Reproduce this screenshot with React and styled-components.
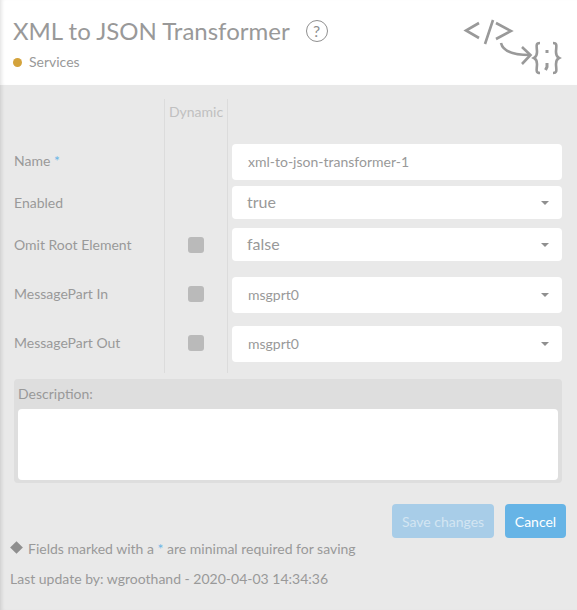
import React from 'react';
import styled, { createGlobalStyle, css } from 'styled-components';

const GlobalStyle = createGlobalStyle`
  html, body {
    margin: 0;
    padding: 0;
    background: #e9e9e9;
    overflow: hidden;
  }
  * {
    box-sizing: border-box;
  }
`;

const edgeShadow = css`
  box-shadow: inset 4px 0 4px -3px rgba(0, 0, 0, 0.14);
`;

const Page = styled.div`
  width: 577px;
  height: 610px;
  background: #e9e9e9;
  font-family: Lato, 'Open Sans', sans-serif;
  color: #999;
  overflow: hidden;
  ${edgeShadow}
`;

const Header = styled.header`
  height: 85px;
  background: #fff;
  display: flex;
  justify-content: space-between;
  padding: 15px 0 0 13px;
  ${edgeShadow}
`;

const TitleRow = styled.div`
  display: flex;
  align-items: center;
  gap: 16px;
`;

const Title = styled.h1`
  margin: 0;
  font-size: 24px;
  font-weight: 400;
  line-height: 32px;
  color: #999;
`;

const HelpIcon = styled.span`
  width: 22px;
  height: 22px;
  border: 1px solid #8f8f8f;
  border-radius: 50%;
  font-size: 16px;
  line-height: 20px;
  text-align: center;
  color: #8f8f8f;
`;

const Crumb = styled.div`
  display: flex;
  align-items: center;
  gap: 7px;
  margin-top: 6px;
  font-size: 14px;
  line-height: 18px;
  color: #999;
`;

const Dot = styled.span`
  width: 9px;
  height: 9px;
  border-radius: 50%;
  background: #d4a33c;
`;

const Logo = styled.svg`
  margin: -1px 0 0 0;
  flex: none;
`;

const Form = styled.div`
  padding: 14px 15px 0 14px;
`;

const Row = styled.div`
  display: grid;
  grid-template-columns: 150px 64px 1fr;
  height: ${(p) => p.$height}px;
`;

const Label = styled.label`
  font-size: 14px;
  line-height: ${(p) => p.$line}px;
  color: #999;
`;

const Required = styled.span`
  color: #6cb6e6;
`;

const DynamicCell = styled.div`
  border-left: 1px solid #dcdcdc;
  border-right: 1px solid #dcdcdc;
  display: flex;
  justify-content: center;
  padding-top: ${(p) => p.$top}px;
`;

const DynamicHead = styled.span`
  font-size: 14px;
  color: #c0c0c0;
  line-height: 26px;
`;

const Check = styled.span`
  width: 16px;
  height: 16px;
  border-radius: 3px;
  background: #bababa;
`;

const FieldCell = styled.div`
  padding-left: 4px;
`;

const Field = styled.div`
  height: ${(p) => p.$height}px;
  background: #fff;
  border-radius: 4px;
  display: flex;
  align-items: center;
  justify-content: space-between;
  padding: 0 13px 2px ${(p) => (p.$size === 16 ? 15 : 16)}px;
  font-size: ${(p) => p.$size}px;
  color: #999;
`;

const Caret = styled.span`
  width: 0;
  height: 0;
  margin-top: 2px;
  border-left: 4px solid transparent;
  border-right: 4px solid transparent;
  border-top: 4px solid #8f8f8f;
`;

const DescriptionPanel = styled.div`
  margin: 6px 0 0 0;
  width: 548px;
  height: 104px;
  background: #dedede;
  border-radius: 4px;
  padding: 0 4px 3px;
  display: flex;
  flex-direction: column;
`;

const DescriptionLabel = styled.div`
  font-size: 14px;
  line-height: 30px;
  color: #999;
`;

const DescriptionBox = styled.div`
  flex: 1;
  background: #fff;
  border-radius: 4px;
`;

const Actions = styled.div`
  display: flex;
  justify-content: flex-end;
  gap: 11px;
  margin: 21px -4px 0 0;
`;

const Button = styled.button`
  height: 34px;
  padding: 0;
  width: ${(p) => p.$width}px;
  border: 0;
  border-radius: 4px;
  font-family: inherit;
  font-size: 14px;
  color: ${(p) => (p.$muted ? '#d3e5f2' : '#fff')};
  background: ${(p) => (p.$muted ? '#a8cde8' : '#66b4e6')};
`;

const Footer = styled.div`
  padding: 2px 0 0 10px;
  font-size: 14px;
  color: #999;
`;

const Note = styled.div`
  line-height: 18px;
  display: flex;
  align-items: center;
  white-space: pre;
`;

const Diamond = styled.span`
  width: 9px;
  height: 9px;
  background: #8f8f8f;
  transform: rotate(45deg);
  margin: -3px 7px 0 2px;
`;

const Updated = styled.div`
  margin-top: 12px;
  line-height: 18px;
`;

const rows = [
  { label: 'Name', required: true, height: 42, line: 34, field: 36, size: 14, value: 'xml-to-json-transformer-1' },
  { label: 'Enabled', height: 42, line: 34, field: 33, size: 16, value: 'true', caret: true },
  { label: 'Omit Root Element', height: 49, line: 34, field: 33, size: 16, value: 'false', caret: true, check: 9 },
  { label: 'MessagePart In', height: 49, line: 34, field: 36, size: 14, value: 'msgprt0', caret: true, check: 9 },
  { label: 'MessagePart Out', height: 47, line: 34, field: 36, size: 14, value: 'msgprt0', caret: true, check: 9 },
];

export default function App() {
  return (
    <Page>
      <GlobalStyle />
      <Header>
        <div>
          <TitleRow>
            <Title>XML to JSON Transformer</Title>
            <HelpIcon>?</HelpIcon>
          </TitleRow>
          <Crumb>
            <Dot />
            Services
          </Crumb>
        </div>
        <Logo width="115" height="70" viewBox="462 8 115 70" fill="none" stroke="#999" strokeWidth="2.6">
          <path d="M479 17 L466 24.5 L479 32" />
          <path d="M493 14 L485 38" />
          <path d="M496 17 L511 25 L496 33" />
          <path d="M501 37 C503 46 515 49 530 49" />
          <path d="M522 41 L530.5 49 L522 58" />
          <path d="M540 37 C535 37 537 41 537 46 C537 50 536 51 534 52 C536 53 537 54 537 58 C537 63 535 67 540 67" />
          <path d="M553 37 C558 37 556 41 556 46 C556 50 557 51 559 52 C557 53 556 54 556 58 C556 63 558 67 553 67" />
          <path d="M547 44 L547 47 M547 57 L547 61 L545.5 64" strokeWidth="3" />
        </Logo>
      </Header>
      <Form>
        <Row $height={45}>
          <span />
          <DynamicCell $top={0}>
            <DynamicHead>Dynamic</DynamicHead>
          </DynamicCell>
          <span />
        </Row>
        {rows.map((row) => (
          <Row key={row.label} $height={row.height}>
            <Label $line={row.line}>
              {row.label}
              {row.required && <Required> *</Required>}
            </Label>
            <DynamicCell $top={row.check || 0}>{row.check && <Check />}</DynamicCell>
            <FieldCell>
              <Field $height={row.field} $size={row.size}>
                {row.value}
                {row.caret && <Caret />}
              </Field>
            </FieldCell>
          </Row>
        ))}
        <DescriptionPanel>
          <DescriptionLabel>Description:</DescriptionLabel>
          <DescriptionBox />
        </DescriptionPanel>
        <Actions>
          <Button $muted $width={102}>Save changes</Button>
          <Button $width={61}>Cancel</Button>
        </Actions>
      </Form>
      <Footer>
        <Note>
          <Diamond />
          Fields marked with a <Required>*</Required> are minimal required for saving
        </Note>
        <Updated>Last update by: wgroothand - 2020-04-03 14:34:36</Updated>
      </Footer>
    </Page>
  );
}
